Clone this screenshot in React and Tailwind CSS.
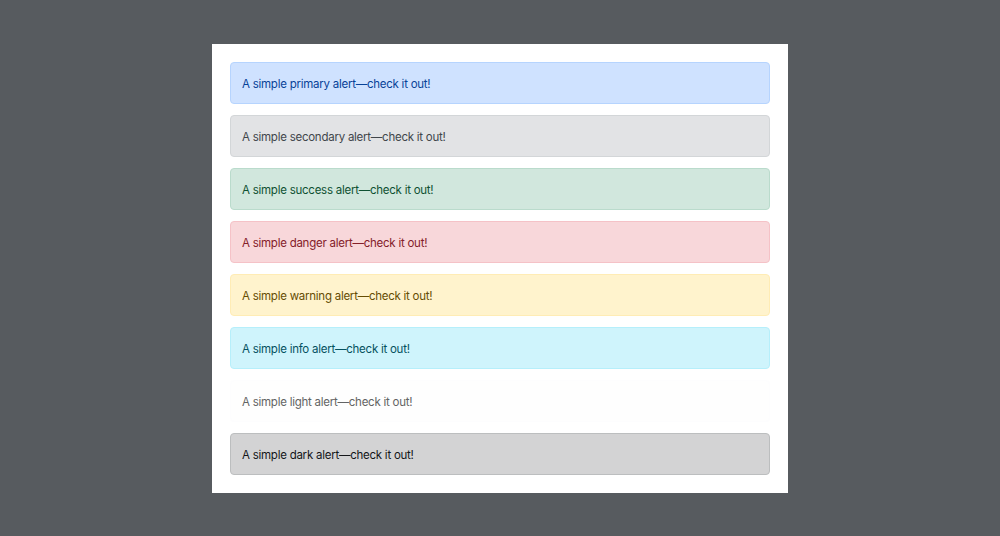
export default function App() {
  const alerts = [
    { name: "primary", cls: "bg-[#cfe2ff] border-[#b6d4fe] text-[#084298]" },
    { name: "secondary", cls: "bg-[#e2e3e5] border-[#d3d6d8] text-[#41464b]" },
    { name: "success", cls: "bg-[#d1e7dd] border-[#badbcc] text-[#0f5132]" },
    { name: "danger", cls: "bg-[#f8d7da] border-[#f5c2c7] text-[#842029]" },
    { name: "warning", cls: "bg-[#fff3cd] border-[#ffecb5] text-[#664d03]" },
    { name: "info", cls: "bg-[#cff4fc] border-[#b6effb] text-[#055160]" },
    { name: "light", cls: "bg-[#fefefe] border-[#fdfdfe] text-[#636464]" },
    { name: "dark", cls: "bg-[#d3d3d4] border-[#bcbebf] text-[#141619]" },
  ];
  return (
    <div className="w-[1000px] h-[536px] bg-[#575b5f] flex justify-center pt-[44px] font-['Inter',sans-serif]">
      <div className="w-[576px] h-[449px] bg-white px-[18px] pt-[18px] flex flex-col gap-[11px]">
        {alerts.map((a) => (
          <div
            key={a.name}
            className={`h-[42px] border rounded-[4px] px-[11px] pt-[2px] flex items-center text-[11.5px] tracking-[-0.25px] leading-[18px] ${a.cls}`}
          >
            A simple {a.name} alert—check it out!
          </div>
        ))}
      </div>
    </div>
  );
}
